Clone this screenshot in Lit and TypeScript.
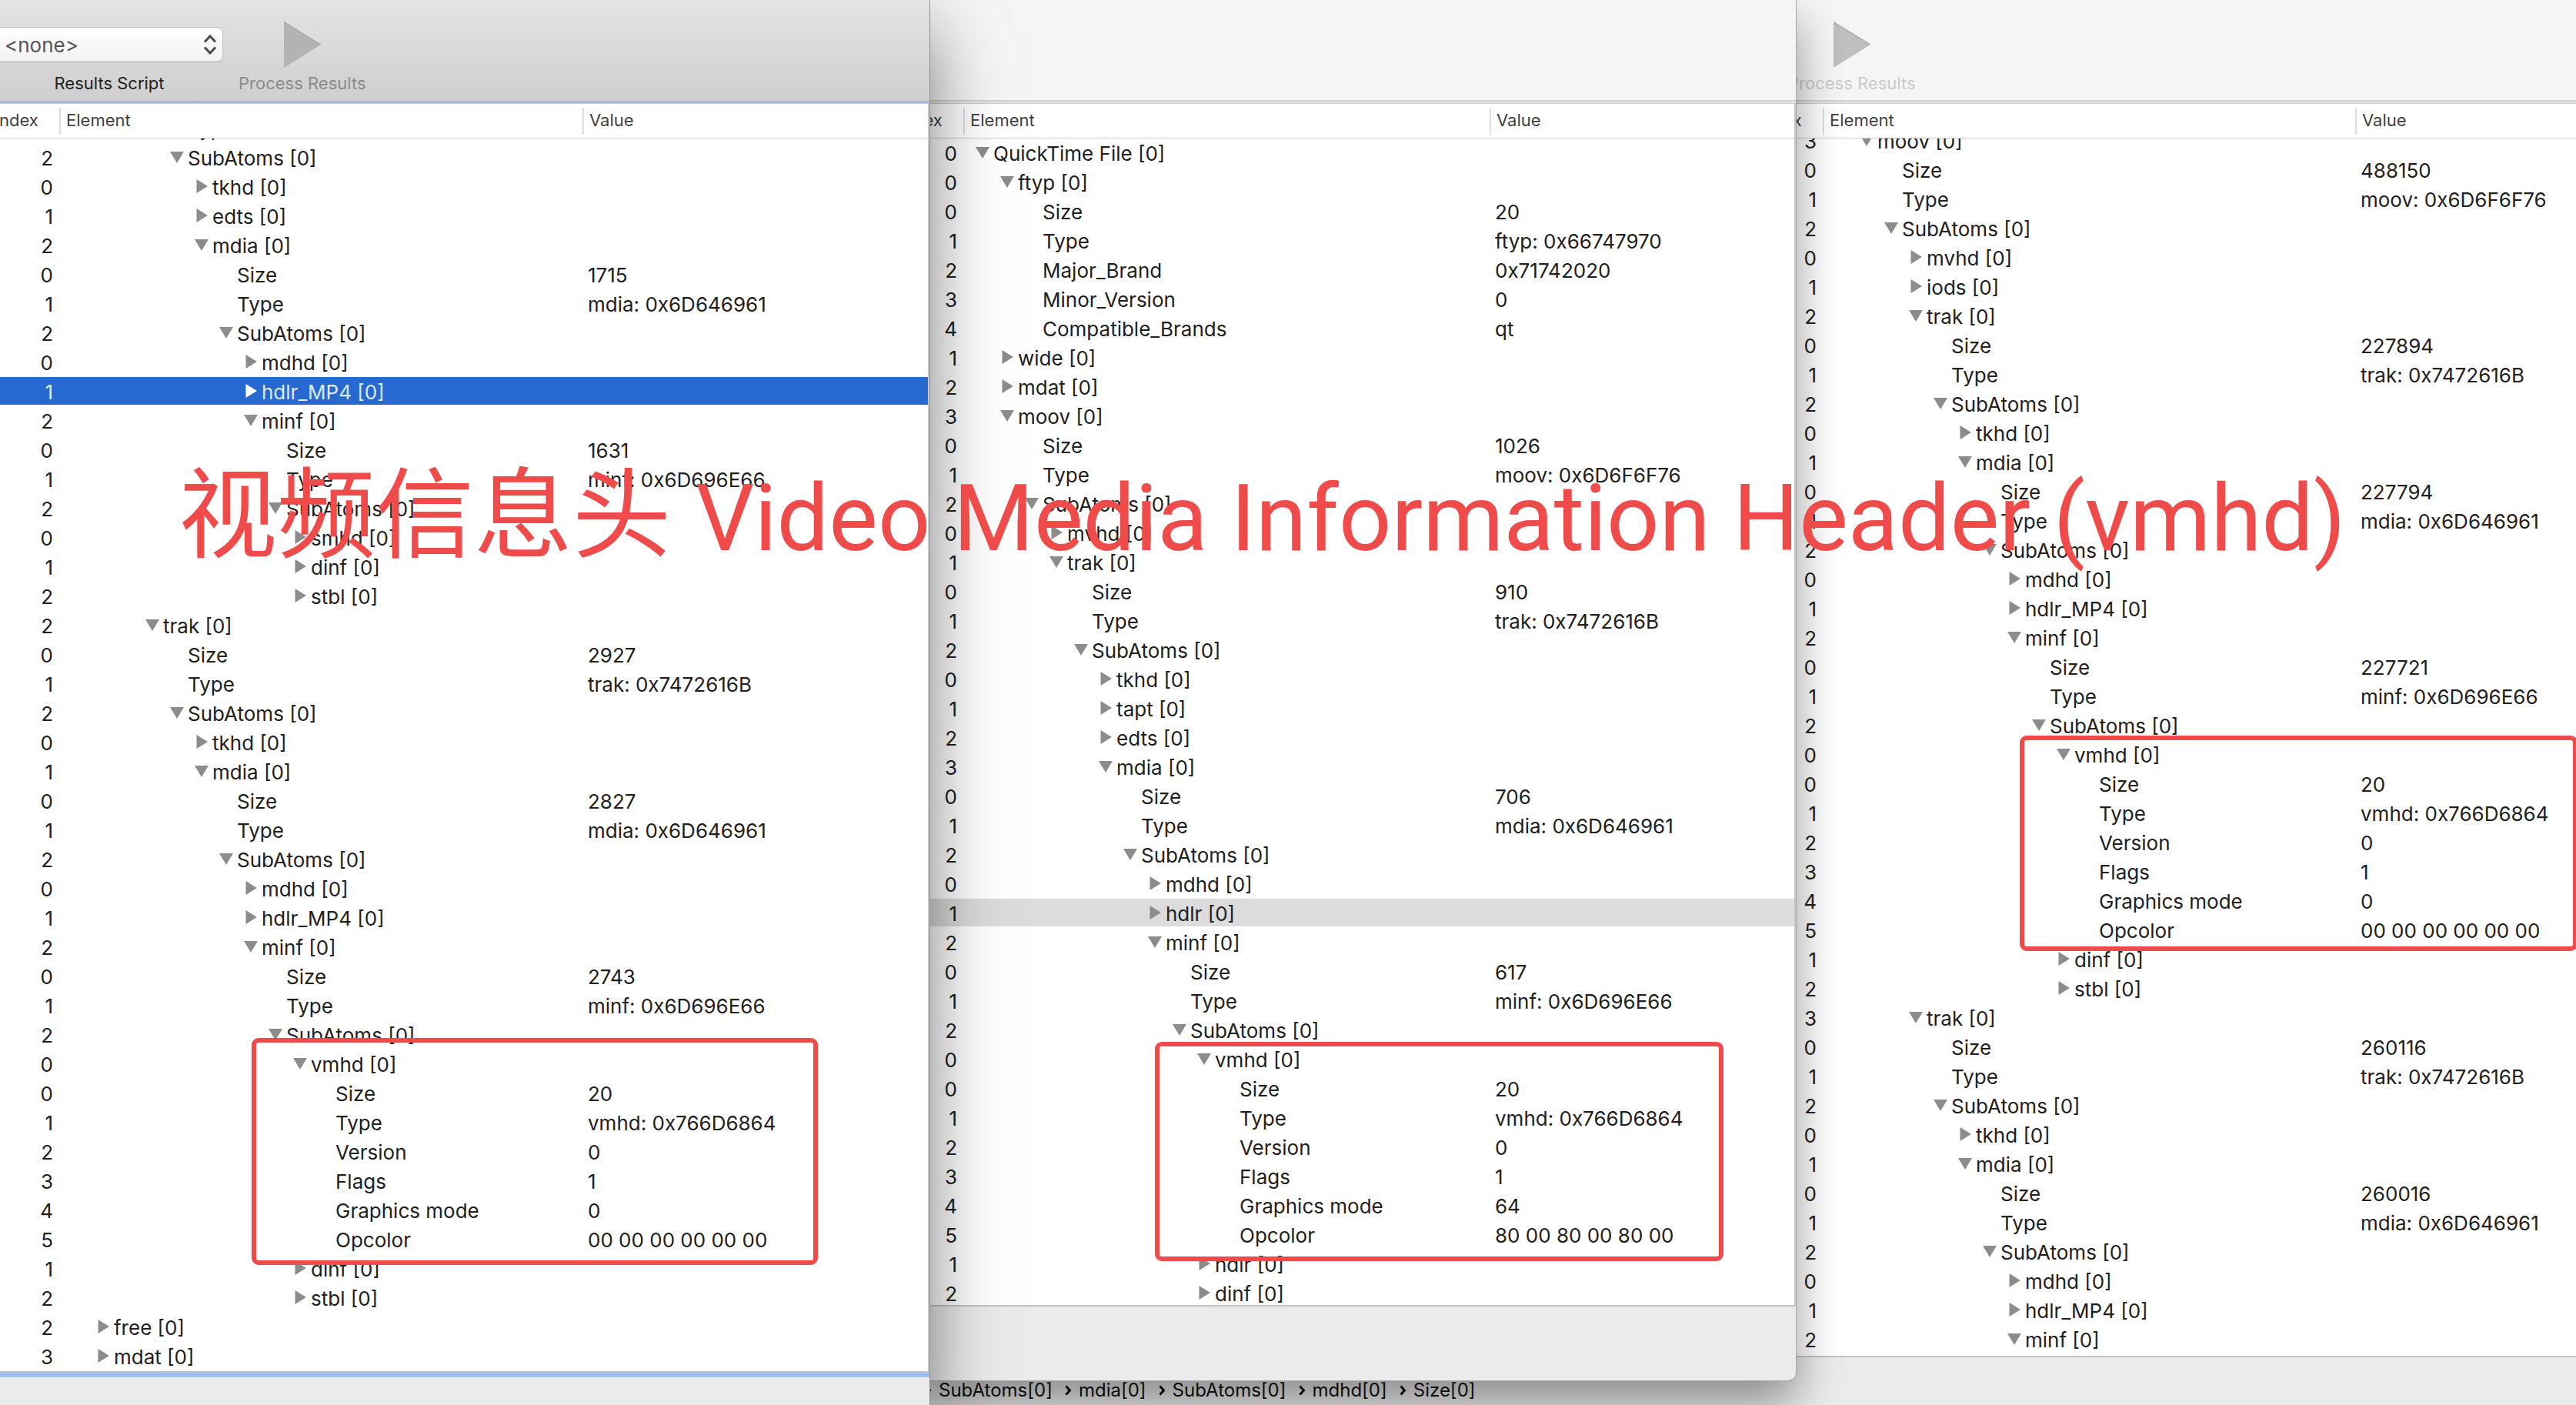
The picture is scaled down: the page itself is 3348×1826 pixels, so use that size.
import { LitElement, html, css, svg } from "lit";
import { customElement, property } from "lit/decorators.js";
import { classMap } from "lit/directives/class-map.js";

type Kind = "open" | "closed" | "leaf";

interface AtomRow {
  index: number;
  kind: Kind;
  level: number;
  label: string;
  value: string;
}

const KINDS: Record<string, Kind> = { v: "open", ">": "closed", "-": "leaf" };

/** Each line reads: index, kind (v open, > closed, - leaf), level, label | value */
function parse(source: string): AtomRow[] {
  return source
    .trim()
    .split("\n")
    .map((line) => {
      const [head, value = ""] = line.trim().split("|");
      const [index, kind, level, ...label] = head.split(" ");
      const name = label.join(" ");
      return {
        index: Number(index),
        kind: KINDS[kind],
        level: Number(level),
        label: kind === "-" ? name : `${name} [0]`,
        value,
      };
    });
}

const MP4_ROWS = parse(`
1 - 4 Type|trak: 0x7472616B
2 v 4 SubAtoms
0 > 5 tkhd
1 > 5 edts
2 v 5 mdia
0 - 6 Size|1715
1 - 6 Type|mdia: 0x6D646961
2 v 6 SubAtoms
0 > 7 mdhd
1 > 7 hdlr_MP4
2 v 7 minf
0 - 8 Size|1631
1 - 8 Type|minf: 0x6D696E66
2 v 8 SubAtoms
0 > 9 smhd
1 > 9 dinf
2 > 9 stbl
2 v 3 trak
0 - 4 Size|2927
1 - 4 Type|trak: 0x7472616B
2 v 4 SubAtoms
0 > 5 tkhd
1 v 5 mdia
0 - 6 Size|2827
1 - 6 Type|mdia: 0x6D646961
2 v 6 SubAtoms
0 > 7 mdhd
1 > 7 hdlr_MP4
2 v 7 minf
0 - 8 Size|2743
1 - 8 Type|minf: 0x6D696E66
2 v 8 SubAtoms
0 v 9 vmhd
0 - 10 Size|20
1 - 10 Type|vmhd: 0x766D6864
2 - 10 Version|0
3 - 10 Flags|1
4 - 10 Graphics mode|0
5 - 10 Opcolor|00 00 00 00 00 00
1 > 9 dinf
2 > 9 stbl
2 > 1 free
3 > 1 mdat
`);

const QT_ROWS = parse(`
0 v 0 QuickTime File
0 v 1 ftyp
0 - 2 Size|20
1 - 2 Type|ftyp: 0x66747970
2 - 2 Major_Brand|0x71742020
3 - 2 Minor_Version|0
4 - 2 Compatible_Brands|qt
1 > 1 wide
2 > 1 mdat
3 v 1 moov
0 - 2 Size|1026
1 - 2 Type|moov: 0x6D6F6F76
2 v 2 SubAtoms
0 > 3 mvhd
1 v 3 trak
0 - 4 Size|910
1 - 4 Type|trak: 0x7472616B
2 v 4 SubAtoms
0 > 5 tkhd
1 > 5 tapt
2 > 5 edts
3 v 5 mdia
0 - 6 Size|706
1 - 6 Type|mdia: 0x6D646961
2 v 6 SubAtoms
0 > 7 mdhd
1 > 7 hdlr
2 v 7 minf
0 - 8 Size|617
1 - 8 Type|minf: 0x6D696E66
2 v 8 SubAtoms
0 v 9 vmhd
0 - 10 Size|20
1 - 10 Type|vmhd: 0x766D6864
2 - 10 Version|0
3 - 10 Flags|1
4 - 10 Graphics mode|64
5 - 10 Opcolor|80 00 80 00 80 00
1 > 9 hdlr
2 > 9 dinf
`);

const MOVIE_ROWS = parse(`
3 v 1 moov
0 - 2 Size|488150
1 - 2 Type|moov: 0x6D6F6F76
2 v 2 SubAtoms
0 > 3 mvhd
1 > 3 iods
2 v 3 trak
0 - 4 Size|227894
1 - 4 Type|trak: 0x7472616B
2 v 4 SubAtoms
0 > 5 tkhd
1 v 5 mdia
0 - 6 Size|227794
1 - 6 Type|mdia: 0x6D646961
2 v 6 SubAtoms
0 > 7 mdhd
1 > 7 hdlr_MP4
2 v 7 minf
0 - 8 Size|227721
1 - 8 Type|minf: 0x6D696E66
2 v 8 SubAtoms
0 v 9 vmhd
0 - 10 Size|20
1 - 10 Type|vmhd: 0x766D6864
2 - 10 Version|0
3 - 10 Flags|1
4 - 10 Graphics mode|0
5 - 10 Opcolor|00 00 00 00 00 00
1 > 9 dinf
2 > 9 stbl
3 v 3 trak
0 - 4 Size|260116
1 - 4 Type|trak: 0x7472616B
2 v 4 SubAtoms
0 > 5 tkhd
1 v 5 mdia
0 - 6 Size|260016
1 - 6 Type|mdia: 0x6D646961
2 v 6 SubAtoms
0 > 7 mdhd
1 > 7 hdlr_MP4
2 v 7 minf
`);

const LEVEL_INDENT = 32;

@customElement("atom-table")
export class AtomTable extends LitElement {
  @property({ attribute: false }) rows: AtomRow[] = [];
  @property({ type: Number }) selected = -1;

  static styles = css`
    :host {
      display: flex;
      flex-direction: column;
      min-height: 0;
      background: #fff;
      border-right: var(--table-edge, 2px) solid #c6c6c6;
      overflow: hidden;
    }
    .table {
      display: flex;
      flex-direction: column;
      flex: 1;
      min-height: 0;
      margin-left: var(--table-shift);
    }
    .head {
      display: block;
      flex: none;
      border-bottom: 1px solid #cfcfcf;
    }
    .body {
      display: block;
      flex: 1;
      min-height: 0;
      overflow: hidden;
    }
    .row {
      display: grid;
      grid-template-columns: 100px var(--element-width) 1fr;
    }
    .head .row {
      height: 44px;
      align-items: center;
    }
    .title {
      height: 35px;
      box-sizing: border-box;
      padding: 0 0 0 7px;
      border-left: 2px solid #dedede;
      font-size: 22px;
      line-height: 32px;
      font-weight: 400;
      text-align: left;
      color: #3f3f3f;
    }
    .title:first-child {
      padding-left: 14px;
      border-left-color: transparent;
    }
    .body .row {
      height: 36px;
      margin-bottom: 2px;
      line-height: 40px;
      font-size: 26px;
      color: #202020;
    }
    .body .row:first-child {
      margin-top: var(--scroll-shift);
    }
    .cell {
      padding: 0;
      white-space: nowrap;
    }
    .index {
      padding-right: 8px;
      text-align: right;
    }
    .element {
      display: flex;
      padding-left: 15px;
    }
    .value {
      padding-left: 7px;
    }
    .toggle,
    .blank {
      flex: none;
      width: 18px;
      height: 36px;
      margin: 0 5px 0 1px;
      padding: 0;
      border: 0;
      background: none;
      color: #8c8c8c;
    }
    .icon {
      display: block;
      fill: currentColor;
    }
    .body .row.selected {
      background: var(--selection-color);
      color: var(--selection-text);
    }
    .selected .toggle {
      color: var(--selection-icon);
    }
  `;

  private marker(row: AtomRow) {
    if (row.kind === "leaf") return html`<span class="blank"></span>`;
    const open = row.kind === "open";
    return html`<button
      class="toggle"
      type="button"
      aria-expanded=${open ? "true" : "false"}
      aria-label=${row.label}
    >
      <svg class="icon" width="18" height="36" viewBox="0 0 18 36">
        ${open
          ? svg`<path d="M0 11H18L9 26Z" />`
          : svg`<path d="M2.5 9L17 18L2.5 27Z" />`}
      </svg>
    </button>`;
  }

  render() {
    return html`
      <table class="table">
        <thead class="head">
          <tr class="row">
            <th class="title" scope="col">Index</th>
            <th class="title" scope="col">Element</th>
            <th class="title" scope="col">Value</th>
          </tr>
        </thead>
        <tbody class="body">
          ${this.rows.map(
            (row, i) => html`<tr class=${classMap({ row: true, selected: i === this.selected })}>
              <td class="cell index">${row.index}</td>
              <td class="cell element">
                <span style="width:${row.level * LEVEL_INDENT}px"></span>${this.marker(row)}${row.label}
              </td>
              <td class="cell value">${row.value}</td>
            </tr>`,
          )}
        </tbody>
      </table>
    `;
  }
}

@customElement("process-button")
export class ProcessButton extends LitElement {
  static styles = css`
    :host {
      display: block;
    }
    .button {
      display: flex;
      flex-direction: column;
      align-items: center;
      gap: 6px;
      padding: 0;
      border: 0;
      background: none;
      font: 22px/28px Inter, "Liberation Sans", sans-serif;
      white-space: nowrap;
      color: var(--process-text);
    }
    .icon {
      display: block;
      fill: var(--process-fill);
    }
    .edge {
      fill: none;
      stroke: #9b9b9b;
    }
  `;

  render() {
    return html`<button class="button" type="button" disabled>
      <svg class="icon" width="50" height="60" viewBox="0 0 50 60">
        <path d="M1 0L49 30L1 60Z" />
        <path class="edge" d="M1 0.5L49 30" />
      </svg>
      Process Results
    </button>`;
  }
}

const CRUMBS = ["SubAtoms[0]", "mdia[0]", "SubAtoms[0]", "mdhd[0]", "Size[0]"];

@customElement("app-root")
export class AppRoot extends LitElement {
  static styles = css`
    :host {
      display: block;
      font-family: Inter, "Liberation Sans", "Noto Sans CJK SC", sans-serif;
    }
    .desktop {
      position: relative;
      display: grid;
      grid-template-columns: 1208fr 1126fr 1014fr;
      grid-template-rows: 100vh;
      overflow: hidden;
    }
    .window {
      display: flex;
      flex-direction: column;
      grid-row: 1;
      min-width: 0;
      background: #ebebeb;
      --process-text: #cacaca;
      --process-fill: #bfbfbf;
      --selection-color: #dcdcdc;
      --selection-text: #202020;
      --selection-icon: #8c8c8c;
    }
    .front {
      grid-column: 1;
      z-index: 3;
      box-shadow: 0 0 0 1px #8f8f8f, 0 40px 90px rgba(0, 0, 0, 0.52);
      --process-text: #8b8b8d;
      --process-fill: #b3b3b3;
      --selection-color: #266ad1;
      --selection-text: #dfe9f8;
      --selection-icon: #fff;
      --table-shift: -23px;
      --element-width: 680px;
      --scroll-shift: -32px;
    }
    .middle {
      grid-column: 2;
      z-index: 2;
      margin-bottom: 32px;
      border-radius: 0 0 10px 0;
      box-shadow: 0 0 0 1px #a8a8a8, 0 28px 60px rgba(0, 0, 0, 0.42);
      --table-shift: -56px;
      --element-width: 684px;
      --scroll-shift: 0px;
    }
    .back {
      grid-column: 2 / 4;
      z-index: 1;
      --table-shift: -65px;
      --table-edge: 0px;
      --element-width: 692px;
      --scroll-shift: -16px;
    }
    .toolbar {
      flex: none;
      display: flex;
      box-sizing: border-box;
      height: 135px;
      padding-top: 28px;
      background: #f5f5f5;
      border-bottom: 1px solid #cccccc;
      box-shadow: inset 0 -2px #e8e8e8, inset 0 -4px #cfcfcf;
    }
    .front .toolbar {
      gap: 20px;
      background: linear-gradient(#e4e4e4, #cececf);
      box-shadow: inset 0 -2px #9fc0ee, inset 0 -3px #b0b0b4;
    }
    .script {
      display: flex;
      flex-direction: column;
      align-items: center;
      gap: 13px;
      width: 296px;
      margin-left: -6px;
      padding-top: 7px;
      font-size: 22px;
      line-height: 28px;
      color: #222;
    }
    .picker {
      display: grid;
      align-items: center;
      width: 100%;
    }
    .select {
      grid-area: 1 / 1;
      appearance: none;
      box-sizing: border-box;
      width: 100%;
      height: 46px;
      padding: 0 40px 0 11px;
      border: 1px solid #c4c4c4;
      border-bottom-color: #a6a6a6;
      border-radius: 8px;
      background: linear-gradient(#fff, #f2f2f2);
      font: 26px Inter, "Liberation Sans", sans-serif;
      color: #555;
    }
    .arrows {
      grid-area: 1 / 1;
      justify-self: end;
      margin-right: 8px;
      fill: none;
      stroke: #4a4a4a;
      stroke-width: 3;
      pointer-events: none;
    }
    .split {
      display: grid;
      grid-template-columns: 1126fr 1014fr;
    }
    .split > * {
      grid-column: 2;
    }
    .back .toolbar {
      display: grid;
    }
    .back process-button {
      justify-self: start;
      margin-left: -10px;
    }
    .sheet {
      flex: 1;
      min-height: 0;
    }
    .sheet.split {
      grid-template-rows: minmax(0, 1fr);
    }
    .footer {
      flex: none;
      box-sizing: border-box;
      border-top: 2px solid #c3c3c3;
    }
    .front .footer {
      height: 44px;
      box-shadow: inset 0 6px #9fc0ee;
    }
    .middle .footer {
      height: 98px;
    }
    .back .footer {
      height: 64px;
    }
    .crumbs {
      display: flex;
      align-items: center;
      gap: 8px;
      margin: 0;
      padding: 28px 0 0 0;
      list-style: none;
      font-size: 24px;
      line-height: 30px;
      color: #111;
    }
    .crumb {
      display: flex;
      align-items: center;
      gap: 9px;
      padding-right: 8px;
    }
    .chevron {
      fill: none;
      stroke: #111;
      stroke-width: 3;
    }
    .crumb:first-child .chevron {
      margin-left: -6px;
    }
    .mark {
      position: absolute;
      z-index: 4;
      box-sizing: border-box;
      border: 6px solid #ef4b4b;
      border-radius: 9px;
    }
    .mark-front {
      left: 327px;
      top: 1349px;
      width: 736px;
      height: 295px;
    }
    .mark-middle {
      left: 1501px;
      top: 1354px;
      width: 739px;
      height: 285px;
    }
    .mark-back {
      left: 2625px;
      top: 956px;
      width: 725px;
      height: 280px;
    }
    .caption {
      position: absolute;
      z-index: 4;
      left: 232px;
      top: 580px;
      display: flex;
      align-items: baseline;
      gap: 32px;
      margin: 0;
      font-family: Roboto, "Liberation Sans", sans-serif;
      font-weight: 400;
      font-size: 120px;
      line-height: 160px;
      white-space: nowrap;
      color: #ef4b4b;
    }
    .han {
      font-family: "Noto Sans CJK SC", sans-serif;
      font-size: 128px;
    }
  `;

  render() {
    return html`
      <main class="desktop">
        <section class="window front">
          <header class="toolbar">
            <div class="script">
              <div class="picker">
                <select class="select" id="script">
                  <option>&lt;none&gt;</option>
                </select>
                <svg class="arrows" width="18" height="26" viewBox="0 0 18 26">
                  <path d="M2 9.5L9 2L16 9.5M2 16.5L9 24L16 16.5" />
                </svg>
              </div>
              <label for="script">Results Script</label>
            </div>
            <process-button></process-button>
          </header>
          <atom-table class="sheet" .rows=${MP4_ROWS} selected="9"></atom-table>
          <footer class="footer"></footer>
        </section>

        <section class="window middle">
          <header class="toolbar"></header>
          <atom-table class="sheet" .rows=${QT_ROWS} selected="26"></atom-table>
          <footer class="footer"></footer>
        </section>

        <section class="window back">
          <header class="toolbar split"><process-button></process-button></header>
          <div class="sheet split">
            <atom-table .rows=${MOVIE_ROWS}></atom-table>
          </div>
          <footer class="footer">
            <ol class="crumbs">
              ${CRUMBS.map(
                (crumb) => html`<li class="crumb">
                  <svg class="chevron" width="9" height="14" viewBox="0 0 9 14">
                    <path d="M1.5 1.5L6.5 7L1.5 12.5" />
                  </svg>
                  ${crumb}
                </li>`,
              )}
            </ol>
          </footer>
        </section>

        <div class="mark mark-front"></div>
        <div class="mark mark-middle"></div>
        <div class="mark mark-back"></div>
        <h1 class="caption">
          <span class="han">视频信息头</span><span>Video Media Information Header (vmhd)</span>
        </h1>
      </main>
    `;
  }
}
